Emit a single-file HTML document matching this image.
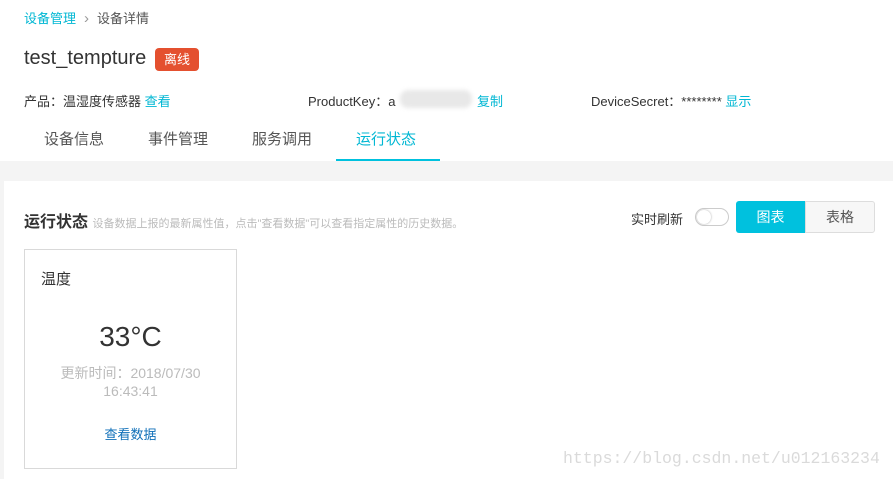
<!DOCTYPE html>
<html><head><meta charset="utf-8"><style>
*{margin:0;padding:0;box-sizing:border-box}
body{width:893px;height:479px;overflow:hidden;background:#fff;font-family:"Liberation Sans","Noto Sans CJK SC",sans-serif;color:#333;position:relative}
.a{position:absolute;white-space:nowrap}
.blue{color:#00b7d3}
</style></head><body>
<div class="a" style="left:24px;top:8px;font-size:13px"><span class="blue">设备管理</span><span style="color:#999;margin:0 8px;font-size:15px">›</span><span style="color:#555">设备详情</span></div>
<div class="a" style="left:24px;top:47px;font-size:20px;color:#333">test_tempture</div>
<div class="a" style="left:155px;top:48px;width:44px;height:23px;background:#e4502f;border-radius:4px;color:#fff;font-size:13px;text-align:center;line-height:23px">离线</div>
<div class="a" style="left:24px;top:91px;font-size:13px">产品：温湿度传感器 <span class="blue">查看</span></div>
<div class="a" style="left:308px;top:91px;font-size:13px">ProductKey：a</div>
<div class="a" style="left:400px;top:90px;width:72px;height:18px;background:#e8e8e8;border-radius:8px;filter:blur(2px)"></div>
<div class="a blue" style="left:477px;top:91px;font-size:13px">复制</div>
<div class="a" style="left:591px;top:91px;font-size:13px">DeviceSecret：******** <span class="blue">显示</span></div>
<div class="a" style="left:44px;top:128px;font-size:15px;color:#555">设备信息</div>
<div class="a" style="left:148px;top:128px;font-size:15px;color:#555">事件管理</div>
<div class="a" style="left:252px;top:128px;font-size:15px;color:#555">服务调用</div>
<div class="a blue" style="left:356px;top:128px;font-size:15px">运行状态</div>
<div class="a" style="left:336px;top:159px;width:104px;height:2px;background:#00c1de"></div>
<div class="a" style="left:0;top:161px;width:893px;height:318px;background:#f4f4f4"></div>
<div class="a" style="left:4px;top:181px;width:889px;height:298px;background:#fff"></div>
<div class="a" style="left:24px;top:208px;font-size:16px;font-weight:bold;color:#333">运行状态 <span style="font-size:11px;font-weight:normal;color:#bbb">设备数据上报的最新属性值，点击"查看数据"可以查看指定属性的历史数据。</span></div>
<div class="a" style="left:631px;top:209px;font-size:13px">实时刷新</div>
<div class="a" style="left:695px;top:208px;width:34px;height:18px;border:1px solid #ccc;border-radius:9px;background:#fff"><div style="position:absolute;left:1px;top:1px;width:14px;height:14px;border-radius:50%;background:#fff;box-shadow:0 0 2px #aaa"></div></div>
<div class="a" style="left:736px;top:201px;width:69px;height:32px;background:#00c1de;border-radius:3px 0 0 3px;color:#fff;font-size:14px;text-align:center;line-height:32px">图表</div>
<div class="a" style="left:805px;top:201px;width:70px;height:32px;background:#f7f7f7;border:1px solid #ddd;border-radius:0 3px 3px 0;color:#555;font-size:14px;text-align:center;line-height:30px">表格</div>
<div class="a" style="left:24px;top:249px;width:213px;height:220px;border:1px solid #d9d9d9;background:#fff"></div>
<div class="a" style="left:41px;top:268px;font-size:15px;color:#333">温度</div>
<div class="a" style="left:24px;top:321px;width:213px;text-align:center;font-size:28px;color:#333">33°C</div>
<div class="a" style="left:24px;top:364px;width:213px;text-align:center;font-size:14px;color:#bbb;line-height:18px;white-space:normal">更新时间：2018/07/30<br>16:43:41</div>
<div class="a" style="left:24px;top:424px;width:213px;text-align:center;font-size:13px;color:#0f6fb8">查看数据</div>
<div class="a" style="left:563px;top:449px;font-family:'Liberation Mono',monospace;font-size:16.5px;color:#dadada">https://blog.csdn.net/u012163234</div>
</body></html>
